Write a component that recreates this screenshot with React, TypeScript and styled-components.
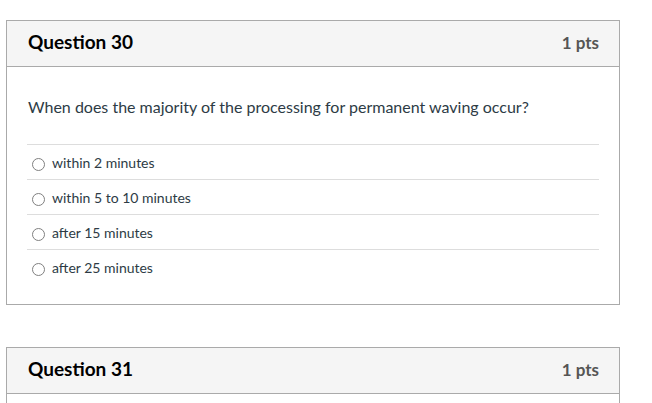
import React from "react";
import styled, { createGlobalStyle } from "styled-components";

const Global = createGlobalStyle`
  html, body { margin: 0; padding: 0; background: #fff; }
  body { font-family: Lato, "Helvetica Neue", Arial, sans-serif; color: #2d3b45; }
`;

const Page = styled.div`
  padding: 20px 32px 0 6px;
  display: flex;
  flex-direction: column;
  gap: 42px;
`;

const Card = styled.div`
  border: 1px solid #aaaaaa;
  background: #fff;
`;

const Header = styled.div`
  box-sizing: border-box;
  height: 46px;
  background: #f5f5f5;
  border-bottom: 1px solid #aaaaaa;
  display: flex;
  align-items: center;
  justify-content: space-between;
  padding: 0 20px 5px 21px;
`;

const Title = styled.h2`
  margin: 0;
  font-size: 19px;
  font-weight: 700;
  color: #000;
`;

const Points = styled.span`
  padding-top: 3px;
  font-size: 17px;
  font-weight: 700;
  color: #555;
`;

const Body = styled.div`
  padding: 30px 20px 20px 20px;
`;

const QuestionText = styled.p`
  margin: 0 0 27px 1px;
  font-size: 16px;
  line-height: 20px;
  color: #2d3b45;
`;

const Answers = styled.div`
  display: flex;
  flex-direction: column;
`;

const Answer = styled.label`
  height: 34px;
  border-top: 1px solid #dddddd;
  display: flex;
  align-items: center;
  gap: 7px;
  padding-left: 5px;
  font-size: 14px;
  color: #2d3b45;
`;

const Radio = styled.span`
  box-sizing: border-box;
  width: 13px;
  height: 13px;
  margin-top: 5px;
  border: 1px solid #808080;
  border-radius: 50%;
  background: #fff;
  flex: none;
`;

const answers = [
  "within 2 minutes",
  "within 5 to 10 minutes",
  "after 15 minutes",
  "after 25 minutes",
];

export default function App() {
  return (
    <>
      <Global />
      <Page>
        <Card>
          <Header>
            <Title>Question 30</Title>
            <Points>1 pts</Points>
          </Header>
          <Body>
            <QuestionText>
              When does the majority of the processing for permanent waving occur?
            </QuestionText>
            <Answers>
              {answers.map((a) => (
                <Answer key={a}>
                  <Radio />
                  {a}
                </Answer>
              ))}
            </Answers>
          </Body>
        </Card>
        <Card>
          <Header>
            <Title>Question 31</Title>
            <Points>1 pts</Points>
          </Header>
          <Body />
        </Card>
      </Page>
    </>
  );
}
